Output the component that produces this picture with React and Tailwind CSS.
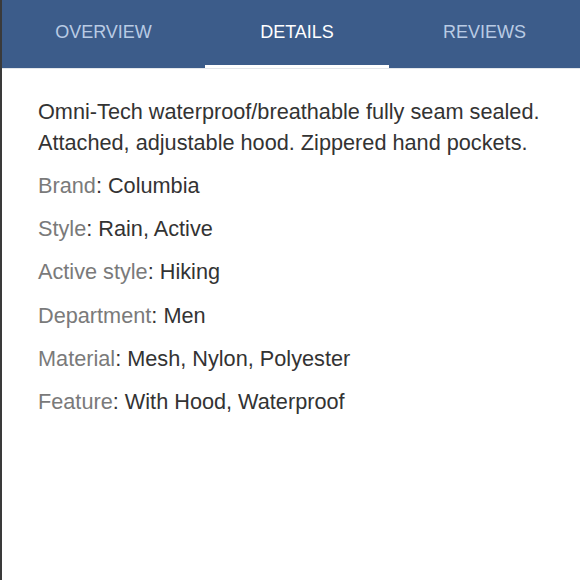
export default function App() {
  const rows = [
    ["Brand", "Columbia"],
    ["Style", "Rain, Active"],
    ["Active style", "Hiking"],
    ["Department", "Men"],
    ["Material", "Mesh, Nylon, Polyester"],
    ["Feature", "With Hood, Waterproof"],
  ];
  return (
    <div className="w-[580px] h-[580px] bg-white border-l-2 border-[#3a3a3a] flex flex-col" style={{ fontFamily: '"Liberation Sans", Arial, sans-serif' }}>
      <div className="h-[68px] bg-[#3c5c8a] flex text-[18px] leading-[18px]">
        <div className="w-[203px] flex justify-center pt-[23px] text-[#b9cbe4]">OVERVIEW</div>
        <div className="w-[184px] flex flex-col">
          <div className="flex-1 flex justify-center pt-[23px] text-white">DETAILS</div>
          <div className="h-[3px] bg-white"></div>
        </div>
        <div className="flex-1 flex justify-center pt-[23px] text-[#b9cbe4]">REVIEWS</div>
      </div>
      <div className="h-px bg-[#e3e6ea]"></div>
      <div className="pl-[36px] pt-[27px] text-[21.7px] text-[#333]">
        <p className="leading-[31px]">Omni-Tech waterproof/breathable fully seam sealed. Attached, adjustable hood. Zippered hand pockets.</p>
        <div className="mt-[6px] flex flex-col">
          {rows.map(([k, v]) => (
            <div key={k} className="leading-[43.2px]"><span className="text-[#7a7a7a]">{k}</span>: {v}</div>
          ))}
        </div>
      </div>
    </div>
  );
}
